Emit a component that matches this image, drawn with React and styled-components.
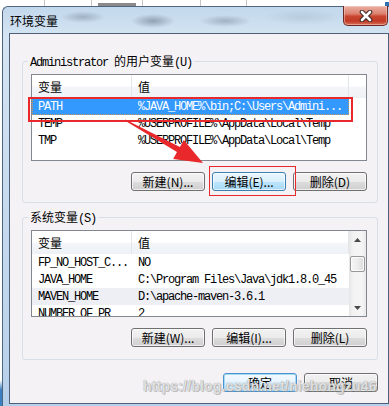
import React from "react";
import styled, { createGlobalStyle, css } from "styled-components";

const GlobalStyle = createGlobalStyle`
  html, body { margin: 0; padding: 0; width: 389px; height: 406px; overflow: hidden; background: #fff; }
  body { font-family: "Noto Sans CJK SC", "Liberation Sans", sans-serif; font-size: 12px; color: #000; }
  * { box-sizing: border-box; }
`;

const Screen = styled.div`
  position: relative;
  width: 389px;
  height: 406px;
  overflow: hidden;
  padding: 6px 0 0 2px;
  background:
    linear-gradient(#2d6fb0, #2d6fb0) 385px 2px / 4px 4px no-repeat,
    linear-gradient(#8a8a8a, #8a8a8a) 98px 3px / 38px 3px no-repeat,
    linear-gradient(#c4c4c4, #c4c4c4) 44px 0 / 1px 6px no-repeat,
    linear-gradient(#c4c4c4, #c4c4c4) 91px 0 / 1px 6px no-repeat,
    linear-gradient(#c4c4c4, #c4c4c4) 142px 0 / 1px 6px no-repeat,
    linear-gradient(#c4c4c4, #c4c4c4) 200px 0 / 1px 6px no-repeat,
    linear-gradient(#c4c4c4, #c4c4c4) 246px 0 / 1px 6px no-repeat,
    linear-gradient(to bottom, #fff 0, #fff 380px, #3b7fc0 390px) 0 0 / 2px 406px no-repeat,
    #fff;
`;

const Window = styled.div`
  height: 400px;
  display: flex;
  flex-direction: column;
  border-left: 1px solid #4f6680;
  border-top: 1px solid #4f6680;
  border-top-left-radius: 6px;
  padding: 0 0 2px 6px;
  background:
    radial-gradient(ellipse 22px 6px at 80px 10px, rgba(80, 96, 116, 0.35), transparent),
    radial-gradient(ellipse 22px 7px at 150px 14px, rgba(70, 86, 106, 0.45), transparent),
    radial-gradient(ellipse 26px 6px at 222px 14px, rgba(80, 96, 116, 0.35), transparent),
    radial-gradient(ellipse 40px 8px at 300px 10px, rgba(120, 140, 160, 0.2), transparent),
    linear-gradient(to bottom, #c3d8ec 0, #d4e4f2 30px, #b7d0ea 100%);
`;

const TitleBar = styled.div`
  height: 26px;
  display: flex;
  justify-content: space-between;
  align-items: flex-start;
  padding-left: 1px;
`;

const Title = styled.span`
  align-self: center;
  font-size: 12px;
  line-height: 14px;
  margin-top: 1px;
  color: #000;
`;

const CloseButton = styled.div`
  width: 45px;
  height: 20px;
  margin-top: -1px;
  margin-right: 1px;
  border: 1px solid #6b2a23;
  border-top: none;
  border-radius: 0 0 5px 5px;
  display: flex;
  align-items: center;
  justify-content: center;
  background: linear-gradient(to bottom, #eab0a2 0, #dd8270 40%, #c8452f 55%, #c23a26 80%, #d8725a 100%);
  box-shadow: inset 0 0 0 1px rgba(255, 220, 210, 0.45);
`;

const Client = styled.div`
  flex: 1;
  display: flex;
  flex-direction: column;
  border: 1px solid #4e6078;
  background: #f5f2f6;
  padding: 20px 10px 0 12px;
`;

const Group = styled.fieldset`
  margin: ${(p) => p.$mt}px 0 0 0;
  padding: 6px 10px ${(p) => p.$pb}px 8px;
  border: 1px solid #d5dfe5;
  border-radius: 3px;
  min-width: 0;
`;

const Legend = styled.legend`
  padding: 0 2px;
  margin-left: -3px;
  font-size: 12px;
  line-height: 14px;
  height: 14px;
  color: #000;
  white-space: nowrap;
`;

const Mono = styled.span`
  font-family: "Liberation Mono", monospace;
  font-size: 12px;
  letter-spacing: -1.2px;
`;

const ListBox = styled.div`
  height: 87px;
  border: 1px solid #828790;
  background: #fff;
  display: flex;
  overflow: hidden;
`;

const Table = styled.div`
  flex: 1;
  min-width: 0;
  display: flex;
  flex-direction: column;
`;

const HeaderRow = styled.div`
  display: grid;
  grid-template-columns: 100px 217px 1fr;
  height: 23px;
  flex: none;
  background: linear-gradient(to bottom, #fff 0, #fff 48%, #f4f6f9 52%, #eef2f6 100%);
`;

const HeaderCell = styled.div`
  display: flex;
  align-items: center;
  padding-left: 6px;
  border-right: 1px solid #e2e5ea;
  font-size: 12px;
  &:last-child { border-right: none; }
`;

const Row = styled.div`
  display: grid;
  grid-template-columns: 100px 217px;
  width: 317px;
  height: 17px;
  flex: none;
  align-items: center;
  font-family: "Liberation Mono", monospace;
  font-size: 12px;
  letter-spacing: -1.2px;
  color: ${(p) => (p.$selected ? "#fff" : "#000")};
  background: ${(p) => (p.$selected ? "#3399ff" : p.$hover ? "#eeeef5" : "transparent")};
  ${(p) =>
    p.$selected &&
    css`
      outline: 1px dotted #c8955a;
      outline-offset: -1px;
    `}
`;

const Cell = styled.span`
  padding-left: 6px;
  white-space: nowrap;
  overflow: hidden;
`;

const ScrollBar = styled.div`
  width: 17px;
  flex: none;
  display: flex;
  flex-direction: column;
  align-items: center;
  background: linear-gradient(to right, #e6e6e6 0, #f3f3f3 25%, #f5f5f5 75%, #e9e9e9 100%);
`;

const ScrollArrow = styled.div`
  width: 17px;
  height: 17px;
  flex: none;
  display: flex;
  align-items: center;
  justify-content: center;
`;

const Thumb = styled.div`
  width: 15px;
  height: 16px;
  margin-top: 8px;
  border: 1px solid #979797;
  border-radius: 2px;
  background: linear-gradient(to right, #f6f6f6 0, #ececec 50%, #dcdcdc 100%);
  box-shadow: inset 0 0 0 1px rgba(255, 255, 255, 0.8);
`;

const Spacer = styled.div`
  flex: 1;
`;

const ButtonRow = styled.div`
  display: flex;
  justify-content: flex-end;
  gap: 7px;
  margin-top: ${(p) => p.$mt}px;
`;

const variants = {
  normal: css`
    border-color: #707070;
    background: linear-gradient(to bottom, #f2f2f2 0, #ebebeb 50%, #dddddd 50%, #cfcfcf 100%);
  `,
  hot: css`
    border-color: #3c7fb1;
    background: linear-gradient(to bottom, #eaf6fd 0, #d9f0fc 50%, #bee6fd 50%, #a7d9f5 100%);
  `,
  default: css`
    border-color: #4a93cf;
    background: linear-gradient(to bottom, #f4fafe 0, #e6f3fc 50%, #d8ecfa 50%, #cfe7f8 100%);
    box-shadow: inset 0 0 0 1px #a6d8f7;
  `,
};

const Button = styled.button`
  width: 74px;
  height: 19px;
  padding: 0;
  border: 1px solid #707070;
  border-radius: 3px;
  font-family: "Noto Sans CJK SC", "Liberation Sans", sans-serif;
  font-size: 12px;
  line-height: 1;
  color: #000;
  box-shadow: inset 0 0 0 1px rgba(255, 255, 255, 0.65);
  ${(p) => variants[p.$variant || "normal"]}
`;

const Footer = styled.div`
  display: flex;
  justify-content: flex-end;
  gap: 7px;
  margin-top: 13px;
`;

const Mark = styled.div`
  position: absolute;
  left: ${(p) => p.$x}px;
  top: ${(p) => p.$y}px;
  width: ${(p) => p.$w}px;
  height: ${(p) => p.$h}px;
  border: ${(p) => p.$b}px solid #e8282b;
  pointer-events: none;
`;

const Overlay = styled.svg`
  position: absolute;
  left: 0;
  top: 0;
  pointer-events: none;
`;

const Watermark = styled.div`
  position: absolute;
  left: 143px;
  top: 378px;
  font-family: "Liberation Sans", sans-serif;
  font-weight: bold;
  font-size: 14px;
  letter-spacing: 0.2px;
  color: rgba(236, 236, 236, 0.9);
  text-shadow: 0 0 1px rgba(110, 110, 110, 0.8), 1px 1px 0 rgba(150, 150, 150, 0.5);
  white-space: nowrap;
  pointer-events: none;
`;

const userVars = [
  { name: "PATH", value: "%JAVA_HOME%\\bin;C:\\Users\\Admini...", selected: true },
  { name: "TEMP", value: "%USERPROFILE%\\AppData\\Local\\Temp" },
  { name: "TMP", value: "%USERPROFILE%\\AppData\\Local\\Temp" },
];

const sysVars = [
  { name: "FP_NO_HOST_C...", value: "NO" },
  { name: "JAVA_HOME", value: "C:\\Program Files\\Java\\jdk1.8.0_45" },
  { name: "MAVEN_HOME", value: "D:\\apache-maven-3.6.1", hover: true },
  { name: "NUMBER_OF_PR", value: "2" },
];

function VarTable({ rows }) {
  return (
    <Table>
      <HeaderRow>
        <HeaderCell>变量</HeaderCell>
        <HeaderCell>值</HeaderCell>
        <HeaderCell />
      </HeaderRow>
      {rows.map((r) => (
        <Row key={r.name} $selected={r.selected} $hover={r.hover}>
          <Cell>{r.name}</Cell>
          <Cell>{r.value}</Cell>
        </Row>
      ))}
    </Table>
  );
}

const Arrow = ({ up }) => (
  <svg width="7" height="4" viewBox="0 0 7 4">
    <polygon points={up ? "3.5,0 7,4 0,4" : "0,0 7,0 3.5,4"} fill="#4a4a4a" />
  </svg>
);

export default function App() {
  return (
    <>
      <GlobalStyle />
      <Screen>
        <Window>
          <TitleBar>
            <Title>环境变量</Title>
            <CloseButton>
              <svg width="16" height="12" viewBox="0 0 16 12">
                <path d="M4 2 L12 10 M12 2 L4 10" stroke="#3d2a28" strokeWidth="4.6" strokeLinecap="round" />
                <path d="M4 2 L12 10 M12 2 L4 10" stroke="#fff" strokeWidth="2.6" strokeLinecap="round" />
              </svg>
            </CloseButton>
          </TitleBar>
          <Client>
            <Group $mt={0} $pb={11}>
              <Legend>
                <Mono>Administrator </Mono>的用户变量<Mono>(U)</Mono>
              </Legend>
              <ListBox>
                <VarTable rows={userVars} />
              </ListBox>
              <ButtonRow $mt={11}>
                <Button>新建(N)...</Button>
                <Button $variant="hot">编辑(E)...</Button>
                <Button>删除(D)</Button>
              </ButtonRow>
            </Group>
            <Group $mt={7} $pb={12}>
              <Legend>
                系统变量<Mono>(S)</Mono>
              </Legend>
              <ListBox>
                <VarTable rows={sysVars} />
                <ScrollBar>
                  <ScrollArrow>
                    <Arrow up />
                  </ScrollArrow>
                  <Thumb />
                  <Spacer />
                  <ScrollArrow>
                    <Arrow />
                  </ScrollArrow>
                </ScrollBar>
              </ListBox>
              <ButtonRow $mt={11}>
                <Button>新建(W)...</Button>
                <Button>编辑(I)...</Button>
                <Button>删除(L)</Button>
              </ButtonRow>
            </Group>
            <Footer>
              <Button $variant="default">确定</Button>
              <Button>取消</Button>
            </Footer>
          </Client>
        </Window>

        <Mark $x={28} $y={97} $w={325} $h={25} $b={2} />
        <Mark $x={209} $y={166} $w={87} $h={30} $b={1} />
        <Overlay width="389" height="406" viewBox="0 0 389 406">
          <polygon
            points="125.3,119.5 179.9,146.9 183.8,139.9 203,163 173.2,159.1 177,152.1 124.7,120.5"
            fill="#e8282b"
          />
        </Overlay>
        <Watermark>https://blog.csdn.net/niehongzu46</Watermark>
      </Screen>
    </>
  );
}
